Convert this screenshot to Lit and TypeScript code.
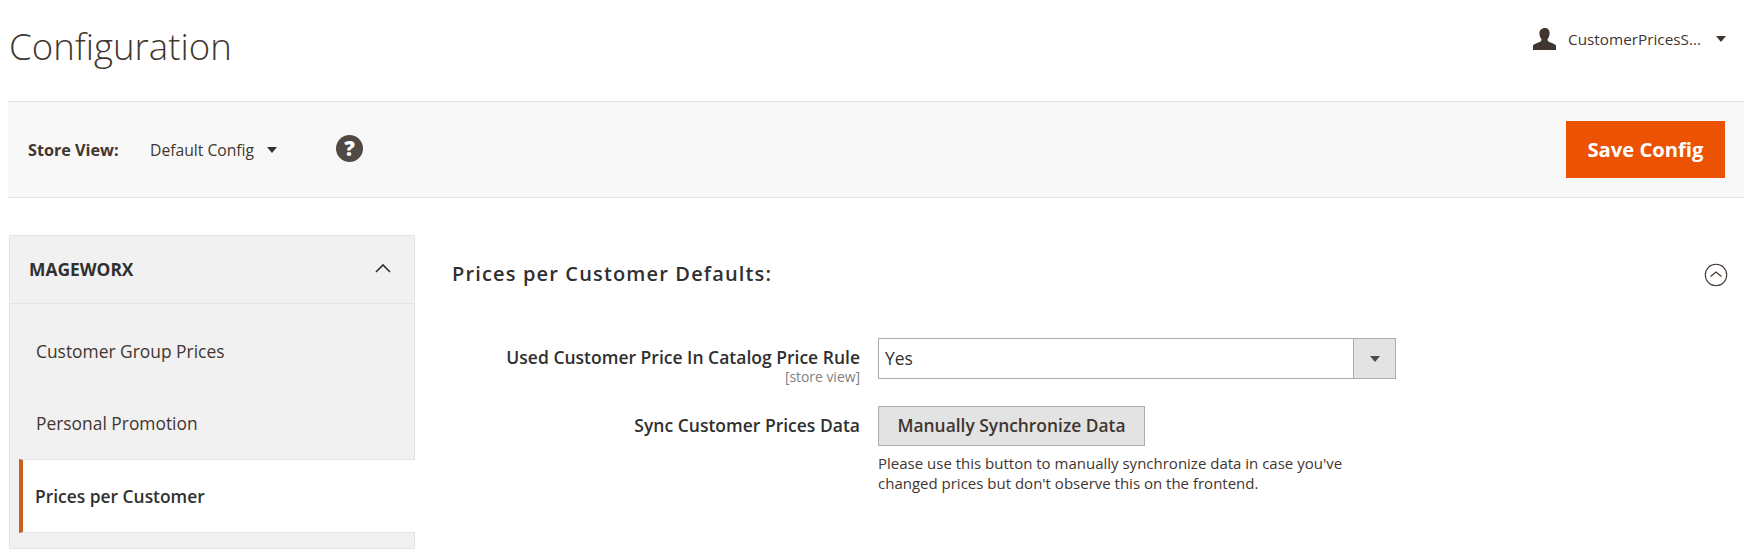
import { LitElement, html, css } from "lit";
import { customElement } from "lit/decorators.js";

@customElement("app-root")
export class AppRoot extends LitElement {
  static styles = css`
    :host { display: block; width: 1748px; height: 558px; overflow: hidden; background: #fff; font-family: "Open Sans", sans-serif; color: #41362f; box-sizing: border-box; padding: 0 4px 0 8px; }
    * { box-sizing: border-box; }
    .top { display: flex; justify-content: space-between; height: 101px; }
    h1 { margin: 0; padding: 22px 0 0 1px; font-size: 36.6px; font-weight: 300; line-height: 48px; color: #41362f; }
    .user { display: flex; align-items: center; height: 24px; margin-top: 27px; margin-right: 18px; font-size: 15.3px; color: #41362f; }
    .user svg.person { width: 24px; height: 22px; margin-right: 11px; }
    .tri { width: 0; height: 0; border-left: 5px solid transparent; border-right: 5px solid transparent; border-top: 6px solid #303030; }
    .user .tri { margin-left: 15px; border-top-color: #41362f; }
    .bar { height: 97px; background: #f8f8f8; border-top: 1px solid #e3e3e3; border-bottom: 1px solid #e3e3e3; display: flex; align-items: center; justify-content: space-between; padding: 0 19px 0 20px; }
    .scope { display: flex; align-items: center; font-size: 15.7px; }
    .scope b { font-weight: 700; width: 122px; font-size: 16.2px; }
    .scope .tri { margin-left: 13px; }
    .help { width: 27px; height: 27px; border-radius: 50%; background: #514943; color: #fff; font-size: 21px; font-weight: 800; line-height: 27px; text-align: center; margin-left: 59px; margin-top: -2px; }
    .save { width: 159px; height: 57px; background: #eb5202; border: 0; color: #fff; font: 700 20.200px "Open Sans", sans-serif; padding: 0; margin-top: -1px; }
    .main { display: flex; padding-top: 37px; }
    .side { width: 406px; height: 314px; margin-left: 1px; background: #f1f1f1; border: 1px solid #e3e3e3; flex: none; display: flex; flex-direction: column; }
    .side-head { height: 68px; border-bottom: 1px solid #e3e3e3; display: flex; align-items: center; justify-content: space-between; padding: 0 22px 2px 19px; font-size: 17.4px; font-weight: 700; color: #303030; }
    .side-head svg { width: 18px; height: 12px; margin-top: -2px; }
    .items { padding-top: 11px; flex: 1; display: flex; flex-direction: column; }
    .item { height: 72px; display: flex; align-items: center; padding-left: 26px; font-size: 17.4px; color: #41362f; }
    .item.active { height: 74px; margin-left: 9px; padding-left: 12px; background: #fff; border-left: 4px solid #c8601e; border-top: 1px solid #e3e3e3; border-bottom: 1px solid #e3e3e3; font-weight: 600; color: #303030; margin-right: -1px; }
    .content { flex: 1; position: relative; padding-left: 37px; }
    .sec-head { display: flex; justify-content: space-between; align-items: center; height: 78px; padding-right: 16px; }
    h2 { margin: 0; font-size: 20px; font-weight: 600; letter-spacing: 1.150px; color: #303030; line-height: 24px; margin-top: -1px; }
    .collapse { width: 24px; height: 24px; margin-top: 1px; }
    .form { display: grid; grid-template-columns: 408px 1fr; column-gap: 18px; margin-top: 25px; }
    .label { text-align: right; font-size: 17.5px; font-weight: 600; color: #303030; line-height: 21px; padding-top: 9px; }
    .scope-note { display: block; font-size: 13.9px; font-weight: 400; color: #808080; line-height: 16px; margin-top: 1px; }
    .select { width: 518px; height: 41px; border: 1px solid #adadad; display: flex; align-items: stretch; font-size: 17.4px; color: #303030; }
    .select span { flex: 1; padding: 0 0 2px 6px; display: flex; align-items: center; }
    .select i { width: 42px; background: #e3e3e3; border-left: 1px solid #adadad; display: flex; align-items: center; justify-content: center; }
    .select .tri { border-top-color: #514943; }
    .row2 { margin-top: 21px; }
    .row2.label { padding-top: 9px; }
    button.sync { width: 267px; height: 40px; background: #e3e3e3; border: 1px solid #adadad; color: #41362f; font: 600 17.400px "Open Sans", sans-serif; padding: 0 0 2px; display: block; }
    .note { margin: 7px 0 0; font-size: 15px; line-height: 20px; color: #41362f; }
  `;

  render() {
    return html`
      <div class="top">
        <h1>Configuration</h1>
        <div class="user">
          <svg class="person" viewBox="0 0 24 22"><path fill="#41362f" d="M12 0c3 0 4.6 2.2 4.6 5.2 0 2.6-1 4.6-2.1 6 0 1.400.6 2.200 2.500 3 2.600 1.100 5 1.800 6 3.400V22H0v-4.400c1-1.600 3.400-2.300 6-3.400 1.900-.8 2.500-1.600 2.500-3-1.100-1.400-2.100-3.400-2.100-6C6.400 2.200 9 0 12 0z"/></svg>
          <span>CustomerPricesS...</span>
          <div class="tri"></div>
        </div>
      </div>
      <div class="bar">
        <div class="scope">
          <b>Store View:</b>
          <span>Default Config</span>
          <div class="tri"></div>
          <div class="help">?</div>
        </div>
        <button class="save">Save Config</button>
      </div>
      <div class="main">
        <div class="side">
          <div class="side-head">
            <span>MAGEWORX</span>
            <svg viewBox="0 0 18 12"><path d="M2 10l7-7 7 7" fill="none" stroke="#303030" stroke-width="1.600"/></svg>
          </div>
          <div class="items">
            <div class="item">Customer Group Prices</div>
            <div class="item">Personal Promotion</div>
            <div class="item active">Prices per Customer</div>
          </div>
        </div>
        <div class="content">
          <div class="sec-head">
            <h2>Prices per Customer Defaults:</h2>
            <svg class="collapse" viewBox="0 0 24 24"><circle cx="12" cy="12" r="10.700" fill="none" stroke="#41362f" stroke-width="1.100"/><path d="M6.500 13.500L12 9l5.500 4.500" fill="none" stroke="#41362f" stroke-width="1.100"/></svg>
          </div>
          <div class="form">
            <div class="label">Used Customer Price In Catalog Price Rule<span class="scope-note">[store view]</span></div>
            <div class="select"><span>Yes</span><i><div class="tri"></div></i></div>
            <div class="label row2">Sync Customer Prices Data</div>
            <div class="row2">
              <button class="sync">Manually Synchronize Data</button>
              <p class="note">Please use this button to manually synchronize data in case you've<br />changed prices but don't observe this on the frontend.</p>
            </div>
          </div>
        </div>
      </div>
    `;
  }
}
